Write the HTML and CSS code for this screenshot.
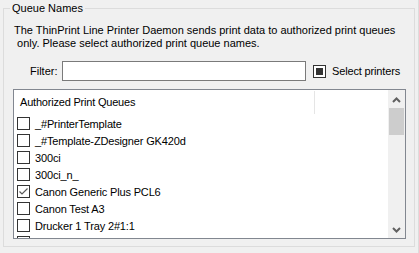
FILE: index.html
```html
<!DOCTYPE html>
<html lang="en">
<head>
    <meta charset="UTF-8">
    <meta name="viewport" content="width=device-width, initial-scale=1.0">
    <title>Queue Names</title>
    <link rel="stylesheet" href="styles.css">
</head>
<body>

    <div class="page">
        <fieldset class="group">
            <legend>Queue Names</legend>
            <p class="intro">The ThinPrint Line Printer Daemon sends print data to authorized print queues<br>&nbsp;only. Please select authorized print queue names.</p>

            <div class="filter-row">
                <label for="filter">Filter:</label>
                <input type="text" id="filter" name="filter">
                <span class="check mixed"></span>
                <span class="check-label">Select printers</span>
            </div>

            <div class="queue-list">
                <div class="list-body">
                    <div class="list-head">
                        <span class="col-name">Authorized Print Queues</span>
                    </div>
                    <ul class="rows">
                        <li><span class="check"></span>_#PrinterTemplate</li>
                        <li><span class="check"></span>_#Template-ZDesigner GK420d</li>
                        <li><span class="check"></span>300ci</li>
                        <li><span class="check"></span>300ci_n_</li>
                        <li><span class="check checked"><svg width="11" height="11" viewBox="0 0 11 11"><polyline points="1.5,5.5 4,8 9.5,2.5" fill="none" stroke="#5a5a5a" stroke-width="1.2"/></svg></span>Canon Generic Plus PCL6</li>
                        <li><span class="check"></span>Canon Test A3</li>
                        <li><span class="check"></span>Drucker 1 Tray 2#1:1</li>
                        <li><span class="check"></span></li>
                    </ul>
                </div>
                <div class="scrollbar">
                    <div class="arrow up"><svg width="9" height="6" viewBox="0 0 9 6"><polyline points="1,5 4.5,1.5 8,5" fill="none" stroke="#606060" stroke-width="2"/></svg></div>
                    <div class="track"><div class="thumb"></div></div>
                    <div class="arrow down"><svg width="9" height="6" viewBox="0 0 9 6"><polyline points="1,1 4.5,4.5 8,1" fill="none" stroke="#606060" stroke-width="2"/></svg></div>
                </div>
            </div>
        </fieldset>
    </div>

</body>
</html>
```

FILE: styles.css
```css
body {
    margin: 0;
    background-color: #f0f0f0;
    font-family: "Liberation Sans", Arial, sans-serif;
    font-size: 11px;
    color: #000;
}
.page {
    height: 253px;
    padding: 2px 3px 0 3px;
    border-right: 1px solid #dcdcdc;
    box-sizing: border-box;
}
.group {
    margin: 0;
    min-width: 0;
    padding: 0 8px 7px 6px;
    border: 1px solid #dcdcdc;
}
.group legend {
    padding: 0 2px;
    line-height: 13px;
}
.intro {
    margin: 9px 0 0 4px;
    line-height: 13px;
}
.filter-row {
    display: flex;
    align-items: center;
    height: 20px;
    margin-top: 11px;
}
.filter-row label {
    width: 32px;
    margin-left: 20px;
}
.filter-row input {
    width: 244px;
    height: 20px;
    padding: 0 3px;
    margin: 0;
    border: 1px solid #7a7a7a;
    box-sizing: border-box;
    background: white;
    font: inherit;
}
.check {
    display: inline-block;
    width: 13px;
    height: 13px;
    border: 1px solid #333;
    box-sizing: border-box;
    background: white;
    flex-shrink: 0;
    position: relative;
}
.check svg {
    display: block;
}
.filter-row .check {
    margin-left: 7px;
    margin-top: 1px;
}
.check.mixed::after {
    content: "";
    position: absolute;
    left: 2px;
    top: 2px;
    width: 7px;
    height: 7px;
    background: #333;
}
.check-label {
    margin-left: 6px;
    letter-spacing: -0.15px;
}
.queue-list {
    display: flex;
    height: 150px;
    margin: 8px 0 0 3px;
    border: 1px solid #828790;
    box-sizing: border-box;
    background: white;
}
.list-body {
    flex: 1;
    overflow: hidden;
}
.list-head {
    height: 24px;
    padding-top: 1px;
    box-sizing: border-box;
}
.col-name {
    display: block;
    width: 294px;
    height: 23px;
    padding-left: 6px;
    line-height: 22px;
    letter-spacing: -0.2px;
    border-right: 1px solid #e5e5e5;
}
.rows {
    list-style: none;
    margin: 1px 0 0 0;
    padding: 0;
}
.rows li {
    display: flex;
    align-items: center;
    height: 17px;
    line-height: 16px;
    letter-spacing: -0.15px;
    white-space: nowrap;
}
.rows .check {
    margin: 0 5px 0 3px;
}
.scrollbar {
    width: 17px;
    display: flex;
    flex-direction: column;
    background: #f0f0f0;
}
.arrow {
    height: 17px;
    display: flex;
    justify-content: center;
    align-items: center;
}
.arrow.up {
    padding-top: 2px;
    box-sizing: border-box;
}
.track {
    flex: 1;
}
.thumb {
    height: 27px;
    margin: 1px 1px 0 1px;
    background: #cdcdcd;
}
```
